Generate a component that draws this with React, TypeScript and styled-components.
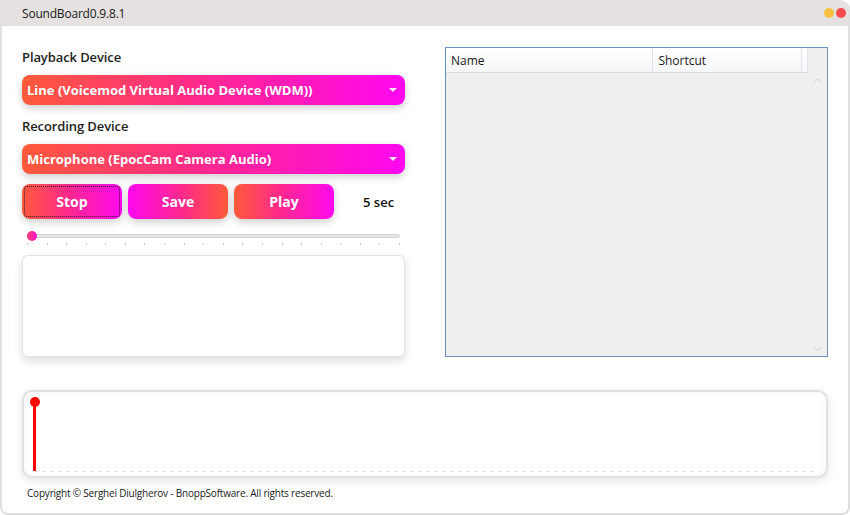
import React from "react";
import styled, { createGlobalStyle } from "styled-components";

const Global = createGlobalStyle`
  html, body { margin: 0; padding: 0; background: #ffffff; }
  body { font-family: "Open Sans", "Noto Sans", sans-serif; }
  * { box-sizing: border-box; }
`;

const Window = styled.div`
  width: 850px;
  height: 515px;
  border: 2px solid #e2dfdf;
  border-top: none;
  border-radius: 0 10px 8px 8px;
  background: #ffffff;
  display: flex;
  flex-direction: column;
  overflow: hidden;
`;

const TitleBar = styled.div`
  height: 26px;
  background: #e4e1e0;
  display: flex;
  align-items: center;
  padding: 0 4px 0 22px;
  margin: 0 -2px;
  font-size: 12px;
  color: #1a1a1a;
  letter-spacing: -0.2px;
`;

const TitleText = styled.span`
  flex: 1;
`;

const Dot = styled.span<{ $c: string }>`
  width: 10px;
  height: 10px;
  border-radius: 50%;
  background: ${(p) => p.$c};
  margin-left: 2px;
`;

const Body = styled.div`
  flex: 1;
  display: flex;
  flex-direction: column;
  padding: 21px 20px 0 20px;
`;

const TopRow = styled.div`
  display: grid;
  grid-template-columns: 383px 383px;
  column-gap: 40px;
`;

const LeftCol = styled.div`
  display: flex;
  flex-direction: column;
`;

const Label = styled.div`
  font-size: 13px;
  font-weight: 600;
  color: #1e1e1e;
  height: 20px;
  line-height: 20px;
  margin-bottom: 8px;
  letter-spacing: -0.1px;
`;

const Select = styled.div`
  height: 30px;
  border-radius: 8px;
  background: linear-gradient(90deg, #ff5a3a 0%, #ff2a8a 45%, #ff08f0 100%);
  box-shadow: 0 3px 8px rgba(0, 0, 0, 0.2);
  display: flex;
  align-items: center;
  padding: 0 8px 0 5px;
  color: #ffffff;
  font-weight: 700;
  font-size: 13px;
  margin-bottom: 11px;
`;

const SelectText = styled.span`
  flex: 1;
`;

const Caret = styled.span`
  width: 0;
  height: 0;
  border-left: 4px solid transparent;
  border-right: 4px solid transparent;
  border-top: 4px solid #ffffff;
  opacity: 0.9;
`;

const ButtonRow = styled.div`
  display: flex;
  align-items: center;
  gap: 6px;
  margin-top: -1px;
`;

const GradButton = styled.div<{ $reverse?: boolean; $focus?: boolean }>`
  width: 100px;
  height: 35px;
  border-radius: 8px;
  background: ${(p) =>
    p.$reverse
      ? "linear-gradient(90deg, #ff08f0 0%, #ff2a8a 55%, #ff5a3a 100%)"
      : "linear-gradient(90deg, #ff5a3a 0%, #ff2a8a 45%, #ff08f0 100%)"};
  box-shadow: 0 3px 8px rgba(0, 0, 0, 0.2);
  color: #ffffff;
  font-weight: 700;
  font-size: 14px;
  display: flex;
  align-items: center;
  justify-content: center;
  position: relative;
  &::after {
    content: "";
    display: ${(p) => (p.$focus ? "block" : "none")};
    position: absolute;
    inset: 2px;
    border: 1px dotted #3a1a30;
    border-radius: 3px;
  }
`;

const Seconds = styled.div`
  margin-left: 23px;
  font-size: 13px;
  font-weight: 600;
  color: #111;
`;

const SliderWrap = styled.div`
  position: relative;
  height: 22px;
  margin: 11px 5px 0 5px;
`;

const Track = styled.div`
  position: absolute;
  left: 0;
  right: 0;
  top: 4px;
  height: 4px;
  border-radius: 2px;
  background: #e4e4e4;
  border: 1px solid #d6d6d6;
`;

const Thumb = styled.div`
  position: absolute;
  left: 0;
  top: 1px;
  width: 10px;
  height: 10px;
  border-radius: 50%;
  background: linear-gradient(90deg, #ff3a70, #ff10d0);
`;

const Ticks = styled.div`
  position: absolute;
  left: 0;
  right: 0;
  top: 13px;
  display: flex;
  justify-content: space-between;
`;

const Tick = styled.span`
  width: 1px;
  height: 2px;
  background: #c8c8c8;
`;

const Panel = styled.div`
  height: 102px;
  margin-top: 3px;
  border: 1px solid #e2e2e2;
  border-radius: 6px;
  background: #ffffff;
  box-shadow: 0 4px 10px rgba(0, 0, 0, 0.14);
`;

const ListView = styled.div`
  height: 310px;
  border: 1px solid #6f90b8;
  background: #efefef;
  position: relative;
`;

const Header = styled.div`
  display: flex;
  height: 25px;
  width: 362px;
  background: linear-gradient(#ffffff, #f4f6f8);
  border-bottom: 1px solid #d5dbe3;
`;

const HeaderCell = styled.div<{ $w: number }>`
  width: ${(p) => p.$w}px;
  border-right: 1px solid #dfe3e8;
  font-size: 12px;
  color: #1a1a1a;
  padding-left: 5px;
  line-height: 25px;
`;

const ScrollArrow = styled.svg<{ $bottom?: boolean }>`
  position: absolute;
  right: 5px;
  ${(p) => (p.$bottom ? "bottom: 4px;" : "top: 30px;")}
`;

const Timeline = styled.div`
  margin-top: 33px;
  height: 88px;
  border: 2px solid #e3e0e0;
  border-radius: 10px;
  background: #ffffff;
  box-shadow: 0 3px 10px rgba(0, 0, 0, 0.1), inset 0 0 8px rgba(0, 0, 0, 0.04);
  position: relative;
  width: 806px;
`;

const Playhead = styled.div`
  position: absolute;
  left: 9px;
  top: 9px;
  width: 3px;
  height: 70px;
  background: #ff0000;
  &::before {
    content: "";
    position: absolute;
    left: -3.5px;
    top: -4px;
    width: 10px;
    height: 10px;
    border-radius: 50%;
    background: #ff0000;
  }
`;

const TimeTicks = styled.div`
  position: absolute;
  left: 8px;
  right: 10px;
  bottom: 4px;
  height: 1px;
  background-image: radial-gradient(circle, #d4d4d4 0.6px, transparent 0.8px);
  background-size: 8px 1px;
`;

const Footer = styled.div`
  font-size: 10px;
  letter-spacing: -0.2px;
  color: #1a1a1a;
  padding: 8px 0 0 5px;
`;

export default function App() {
  const ticks = Array.from({ length: 20 });
  return (
    <>
      <Global />
      <Window>
        <TitleBar>
          <TitleText>SoundBoard0.9.8.1</TitleText>
          <Dot $c="#f7c242" />
          <Dot $c="#fb4d4d" />
        </TitleBar>
        <Body>
          <TopRow>
            <LeftCol>
              <Label>Playback Device</Label>
              <Select>
                <SelectText>Line (Voicemod Virtual Audio Device (WDM))</SelectText>
                <Caret />
              </Select>
              <Label>Recording Device</Label>
              <Select>
                <SelectText>Microphone (EpocCam Camera Audio)</SelectText>
                <Caret />
              </Select>
              <ButtonRow>
                <GradButton $focus>Stop</GradButton>
                <GradButton $reverse>Save</GradButton>
                <GradButton>Play</GradButton>
                <Seconds>5 sec</Seconds>
              </ButtonRow>
              <SliderWrap>
                <Track />
                <Thumb />
                <Ticks>
                  {ticks.map((_, i) => (
                    <Tick key={i} />
                  ))}
                </Ticks>
              </SliderWrap>
              <Panel />
            </LeftCol>
            <ListView>
              <Header>
                <HeaderCell $w={208}>Name</HeaderCell>
                <HeaderCell $w={149}>Shortcut</HeaderCell>
                <HeaderCell $w={5} />
              </Header>
              <ScrollArrow width="9" height="6" viewBox="0 0 9 6">
                <path d="M0.5 5 L4.5 1 L8.5 5" fill="none" stroke="#cfcfcf" strokeWidth="1" />
              </ScrollArrow>
              <ScrollArrow $bottom width="9" height="6" viewBox="0 0 9 6">
                <path d="M0.5 1 L4.5 5 L8.5 1" fill="none" stroke="#cfcfcf" strokeWidth="1" />
              </ScrollArrow>
            </ListView>
          </TopRow>
          <Timeline>
            <Playhead />
            <TimeTicks />
          </Timeline>
          <Footer>Copyright © Serghei Diulgherov - BnoppSoftware. All rights reserved.</Footer>
        </Body>
      </Window>
    </>
  );
}
